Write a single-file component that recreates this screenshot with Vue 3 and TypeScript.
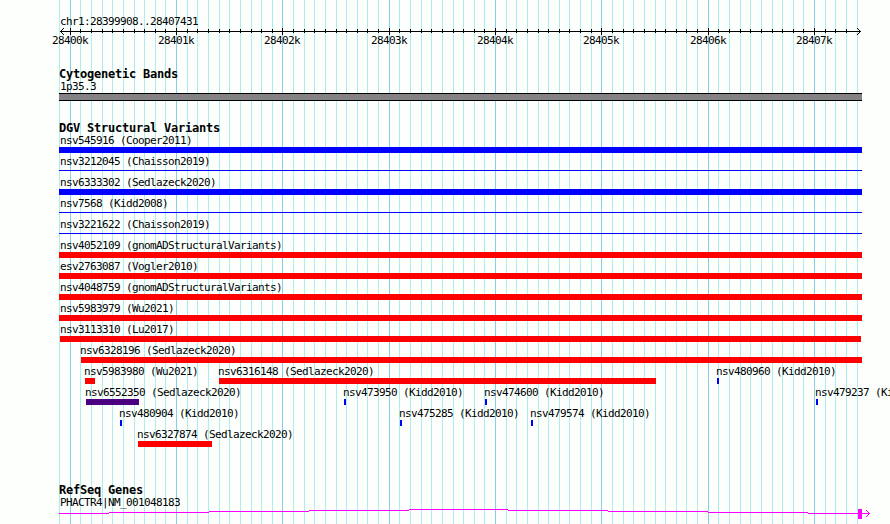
<script setup lang="ts">
interface Feature {
  name: string
  start: number
  end: number
  color: 'blue' | 'red' | 'indigo'
  thin?: boolean
}

const REGION_START = 28399908
const PX_PER_BASE = 800 / 7524

// Canvas x of a base position
function toX(base: number): number {
  return Math.round(59.97 + (base - REGION_START) * PX_PER_BASE)
}

// One grid line every 100 bases, a darker one every 1000
const ticks = Array.from({ length: 76 }, (_, i) => {
  const base = 28399900 + i * 100
  return { x: toX(base), major: base % 1000 === 0, label: `${base / 1000}k` }
})
const majorTicks = ticks.filter((t) => t.major)

// Each inner array is one packed row of the track
const rows: Feature[][] = [
  [{ name: 'nsv545916 (Cooper2011)', start: 59, end: 862, color: 'blue' }],
  [{ name: 'nsv3212045 (Chaisson2019)', start: 59, end: 862, color: 'blue', thin: true }],
  [{ name: 'nsv6333302 (Sedlazeck2020)', start: 59, end: 862, color: 'blue' }],
  [{ name: 'nsv7568 (Kidd2008)', start: 59, end: 862, color: 'blue', thin: true }],
  [{ name: 'nsv3221622 (Chaisson2019)', start: 59, end: 862, color: 'blue', thin: true }],
  [{ name: 'nsv4052109 (gnomADStructuralVariants)', start: 59, end: 862, color: 'red' }],
  [{ name: 'esv2763087 (Vogler2010)', start: 59, end: 862, color: 'red' }],
  [{ name: 'nsv4048759 (gnomADStructuralVariants)', start: 59, end: 862, color: 'red' }],
  [{ name: 'nsv5983979 (Wu2021)', start: 59, end: 862, color: 'red' }],
  [{ name: 'nsv3113310 (Lu2017)', start: 60, end: 861, color: 'red' }],
  [{ name: 'nsv6328196 (Sedlazeck2020)', start: 81, end: 862, color: 'red' }],
  [
    { name: 'nsv5983980 (Wu2021)', start: 85, end: 95, color: 'red' },
    { name: 'nsv6316148 (Sedlazeck2020)', start: 219, end: 656, color: 'red' },
    { name: 'nsv480960 (Kidd2010)', start: 717, end: 719, color: 'blue' }
  ],
  [
    { name: 'nsv6552350 (Sedlazeck2020)', start: 86, end: 139, color: 'indigo' },
    { name: 'nsv473950 (Kidd2010)', start: 344, end: 346, color: 'blue' },
    { name: 'nsv474600 (Kidd2010)', start: 485, end: 487, color: 'blue' },
    { name: 'nsv479237 (Kidd2010)', start: 816, end: 818, color: 'blue' }
  ],
  [
    { name: 'nsv480904 (Kidd2010)', start: 120, end: 122, color: 'blue' },
    { name: 'nsv475285 (Kidd2010)', start: 400, end: 402, color: 'blue' },
    { name: 'nsv479574 (Kidd2010)', start: 531, end: 533, color: 'blue' }
  ],
  [{ name: 'nsv6327874 (Sedlazeck2020)', start: 138, end: 212, color: 'red' }]
]

// Names sit a pixel left of their bar, but never left of the panel's text edge
function nameShift(f: Feature): number {
  return Math.max(60, f.start - 1) - f.start
}

// The intron rises one pixel at a time towards its middle
const intron = [
  [59, 109, 7],
  [109, 209, 6],
  [209, 309, 5],
  [309, 409, 4],
  [409, 508, 3],
  [508, 608, 4],
  [608, 708, 5],
  [708, 808, 6],
  [808, 858, 7]
]
</script>

<template>
  <div class="browser">
    <svg class="grid" width="890" height="524" shape-rendering="crispEdges">
      <rect
        v-for="t in ticks"
        :key="t.x"
        :x="t.x"
        y="0"
        width="1"
        height="524"
        :fill="t.major ? '#87ceeb' : '#afeeee'"
      />
    </svg>

    <header class="ruler">
      <div class="text">chr1:28399908..28407431</div>
      <svg class="axis" width="890" height="9" shape-rendering="crispEdges">
        <rect x="60" y="4" width="801" height="1" />
        <rect
          v-for="t in ticks.slice(1, -1)"
          :key="t.x"
          :x="t.x"
          :y="t.major ? 1 : 2"
          width="1"
          :height="t.major ? 7 : 4"
        />
        <path d="M61 3h1v1h-1zM62 2h1v1h-1zM63 1h1v1h-1zM61 5h1v1h-1zM62 6h1v1h-1zM63 7h1v1h-1z" />
        <path d="M859 3h1v1h-1zM858 2h1v1h-1zM857 1h1v1h-1zM859 5h1v1h-1zM858 6h1v1h-1zM857 7h1v1h-1z" />
      </svg>
      <div class="scale">
        <span
          v-for="t in majorTicks"
          :key="t.x"
          class="tick-label"
          :style="{ left: t.x - 18 + 'px' }"
        >{{ t.label }}</span>
      </div>
    </header>

    <section class="track bands">
      <h2>Cytogenetic Bands</h2>
      <div class="text">1p35.3</div>
      <div class="band"></div>
    </section>

    <section class="track variants">
      <h2>DGV Structural Variants</h2>
      <div v-for="(row, i) in rows" :key="i" class="row">
        <div
          v-for="f in row"
          :key="f.name"
          class="feature"
          :style="{ left: f.start + 'px' }"
        >
          <span class="name" :style="{ marginLeft: nameShift(f) + 'px' }">{{ f.name }}</span>
          <div
            class="bar"
            :class="[f.color, { thin: f.thin }]"
            :style="{ width: f.end - f.start + 'px' }"
          ></div>
        </div>
      </div>
    </section>

    <section class="track genes">
      <h2>RefSeq Genes</h2>
      <div class="text">PHACTR4|NM_001048183</div>
      <svg class="gene" width="890" height="14" fill="#ff00ff" shape-rendering="crispEdges">
        <rect v-for="s in intron" :key="s[0]" :x="s[0]" :y="s[2]" :width="s[1] - s[0]" height="1" />
        <rect x="858" y="3" width="4" height="10" />
        <rect x="862" y="7" width="8" height="1" />
        <path d="M868 6h1v1h-1zM867 5h1v1h-1zM866 4h1v1h-1zM868 8h1v1h-1zM867 9h1v1h-1zM866 10h1v1h-1z" />
      </svg>
    </section>
  </div>
</template>

<style>
body {
  background: #fdfffc;
  overflow: hidden;
}
</style>

<style scoped>
.browser {
  position: relative;
  width: 890px;
  height: 524px;
  overflow: hidden;
  color: #000;
  font-family: "DejaVu Sans Mono", "Liberation Mono", monospace;
  font-size: 11px;
  line-height: 12px;
  letter-spacing: -0.622px;
  white-space: nowrap;
}

.grid {
  position: absolute;
  inset: 0;
}

.ruler,
.track {
  position: relative;
}

.ruler {
  height: 67px;
  padding-top: 15px;
  box-sizing: border-box;
}

.text {
  height: 12px;
  padding-left: 60px;
  line-height: 14px;
}

.axis,
.gene {
  display: block;
}

.scale {
  position: relative;
  height: 12px;
  margin-top: -1px;
}

.tick-label {
  position: absolute;
}

h2 {
  height: 13px;
  margin: 0;
  padding-left: 59px;
  font-size: 12px;
  line-height: 14px;
  letter-spacing: -0.225px;
}

.bands {
  height: 54px;
}

.band {
  box-sizing: border-box;
  width: 803px;
  height: 8px;
  margin: 1px 0 0 59px;
  border: solid #000;
  border-width: 1px 0;
  background: #848284;
}

.variants {
  height: 362px;
}

.row {
  position: relative;
  height: 21px;
}

.feature {
  position: absolute;
  top: 0;
}

.name {
  display: block;
  height: 13px;
  line-height: 14px;
}

.bar {
  height: 6px;
}

.bar.thin {
  height: 1px;
  margin-top: 2px;
}

.blue {
  background: #0000ff;
}

.red {
  background: #ff0000;
}

.indigo {
  background: #4b0082;
}

.genes .gene {
  margin-top: -2px;
}
</style>
